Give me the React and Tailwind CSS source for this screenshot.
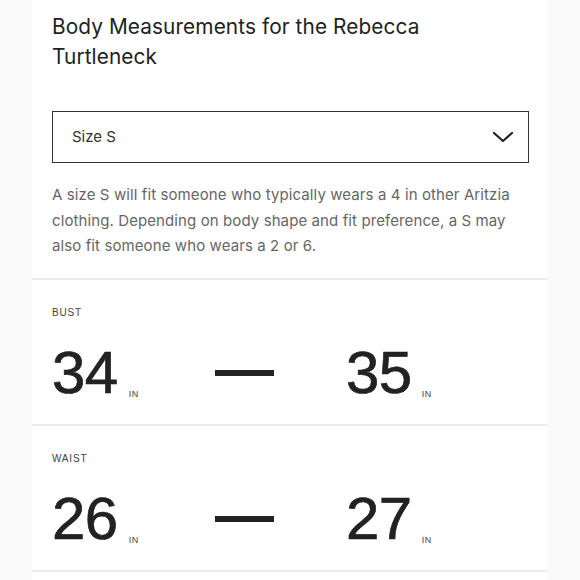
export default function App() {
  const rows = [
    { label: "BUST", a: "34", b: "35" },
    { label: "WAIST", a: "26", b: "27" },
  ];
  return (
    <div className="w-[580px] h-[580px] overflow-hidden bg-[#fafafa] flex">
      <div className="ml-[32px] w-[516px] bg-white flex flex-col">
        <div className="pl-[20px] pr-[19px]" style={{ fontFamily: "Inter, 'Noto Sans', sans-serif" }}>
          <h1 className="pt-[12px] text-[20.8px] leading-[30px] text-[#222] font-normal tracking-[0.1px]">
            Body Measurements for the Rebecca
            <br />
            Turtleneck
          </h1>
          <div className="mt-[39px] h-[52px] border-[1.5px] border-[#333] flex items-center justify-between pl-[19px] pr-[14px]">
            <span className="text-[15px] text-[#333]">Size S</span>
            <svg width="22" height="14" viewBox="0 0 22 14" fill="none">
              <path d="M2 3 L11 11 L20 3" stroke="#222" strokeWidth="2.2" strokeLinecap="round" strokeLinejoin="round" />
            </svg>
          </div>
          <p className="mt-[19px] text-[15px] leading-[25.5px] text-[#666] tracking-[0.1px]">
            A size S will fit someone who typically wears a 4 in other Aritzia clothing. Depending on body shape and fit preference, a S may also fit someone who wears a 2 or 6.
          </p>
        </div>
        <div className="mt-[19px] h-[2px] bg-[#ececec]" />
        {rows.map((r) => (
          <div key={r.label}>
            <div className="pl-[20px] h-[144px] flex flex-col" style={{ fontFamily: "'Liberation Sans', Arial, sans-serif" }}>
              <div className="pt-[27px] text-[10px] leading-[12px] tracking-[0.8px] text-[#444]">{r.label}</div>
              <div className="mt-[24px] flex items-end">
                <div className="w-[163px] flex items-end">
                  <span className="text-[60px] leading-[60px] text-[#222] tracking-[-0.5px] [-webkit-text-stroke:0.7px_#222]">{r.a}</span>
                  <span className="ml-[11px] mb-[4px] text-[9px] leading-[9px] tracking-[0.6px] text-[#444]">IN</span>
                </div>
                <div className="w-[59px] h-[6px] bg-[#222] mb-[27px]" />
                <div className="ml-[72px] flex items-end">
                  <span className="text-[60px] leading-[60px] text-[#222] tracking-[-0.5px] [-webkit-text-stroke:0.7px_#222]">{r.b}</span>
                  <span className="ml-[10px] mb-[4px] text-[9px] leading-[9px] tracking-[0.6px] text-[#444]">IN</span>
                </div>
              </div>
            </div>
            <div className="h-[2px] bg-[#ececec]" />
          </div>
        ))}
      </div>
    </div>
  );
}
